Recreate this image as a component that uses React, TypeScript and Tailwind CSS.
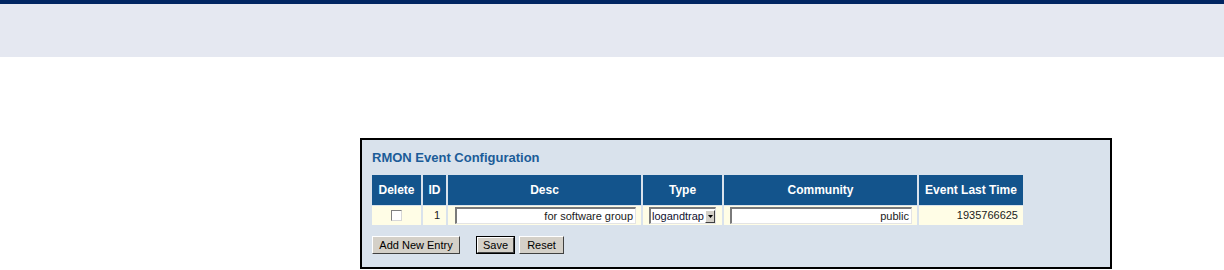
import React from "react";

const font = { fontFamily: '"Liberation Sans", Arial, sans-serif' };

function Th({ w, children }: { w: string; children: React.ReactNode }) {
  return (
    <div className={`${w} h-[30px] bg-[#13548c] text-white font-bold text-[12px] flex items-center justify-center`}>
      {children}
    </div>
  );
}

function TextInput({ value, w }: { value: string; w: string }) {
  return (
    <div
      className={`${w} h-[17px] bg-white border-t-2 border-l-2 border-t-[#7a7a7a] border-l-[#7a7a7a] border-b border-r border-b-[#e4e4e4] border-r-[#e4e4e4] text-[11px] text-[#1a1a1a] flex items-center justify-end pr-[2px] leading-none`}
    >
      {value}
    </div>
  );
}

export default function App() {
  return (
    <div className="w-[1224px] h-[270px] bg-white overflow-hidden" style={font}>
      <div className="h-[4px] bg-[#002562]" />
      <div className="h-[53px] bg-[#e5e8f1]" />
      <div className="pl-[360px] pt-[81px]">
        <div className="w-[752px] h-[131px] border-2 border-black bg-[#d9e2ec] pl-[10px] pt-[10px]">
          <div className="text-[13px] leading-[16px] font-bold text-[#1b5c98]">RMON Event Configuration</div>
          <div className="mt-[9px] flex gap-[2px]">
            <Th w="w-[49px]">Delete</Th>
            <Th w="w-[23px]">ID</Th>
            <Th w="w-[193px]">Desc</Th>
            <Th w="w-[79px]">Type</Th>
            <Th w="w-[193px]">Community</Th>
            <Th w="w-[104px]">Event Last Time</Th>
          </div>
          <div className="mt-[1px] flex gap-[2px] h-[19px] text-[11px] text-[#1a1a1a]">
            <div className="w-[49px] bg-[#fffde6] flex items-center justify-center">
              <div className="w-[11px] h-[11px] bg-white border border-t-[#808080] border-l-[#808080] border-b-[#d8d8d8] border-r-[#d8d8d8]" />
            </div>
            <div className="w-[23px] bg-[#fffde6] flex items-center justify-end pr-[6px]">1</div>
            <div className="w-[193px] bg-[#fffde6] flex items-center pl-[7px]">
              <TextInput value="for software group" w="w-[181px]" />
            </div>
            <div className="w-[79px] bg-[#fffde6] flex items-center pl-[6px]">
              <div className="w-[67px] h-[17px] bg-white border-t-2 border-l-2 border-t-[#7a7a7a] border-l-[#7a7a7a] border-b border-r border-b-[#e4e4e4] border-r-[#e4e4e4] flex items-center justify-between pl-[1px]">
                <span className="text-[11px] leading-none text-[#101030]">logandtrap</span>
                <span className="w-[10px] h-[13px] bg-[#d4d0c8] border border-t-white border-l-white border-b-[#404040] border-r-[#404040] flex items-center justify-center">
                  <svg width="5" height="3" viewBox="0 0 5 3"><path d="M0 0h5L2.5 3z" fill="#000" /></svg>
                </span>
              </div>
            </div>
            <div className="w-[193px] bg-[#fffde6] flex items-center pl-[6px]">
              <TextInput value="public" w="w-[182px]" />
            </div>
            <div className="w-[104px] bg-[#fffde6] flex items-center justify-end pr-[5px]">1935766625</div>
          </div>
          <div className="mt-[11px] flex items-center text-[11px] text-black">
            <div className="w-[88px] h-[18px] bg-[#d4d0c8] border border-t-white border-l-white border-b-[#404040] border-r-[#404040] flex items-center justify-center">
              Add New Entry
            </div>
            <div className="ml-[16px] w-[39px] h-[18px] border border-black">
              <div className="w-full h-full bg-[#d4d0c8] border border-t-white border-l-white border-b-[#404040] border-r-[#404040] flex items-center justify-center">
                Save
              </div>
            </div>
            <div className="ml-[4px] w-[45px] h-[18px] bg-[#d4d0c8] border border-t-white border-l-white border-b-[#404040] border-r-[#404040] flex items-center justify-center">
              Reset
            </div>
          </div>
        </div>
      </div>
    </div>
  );
}
